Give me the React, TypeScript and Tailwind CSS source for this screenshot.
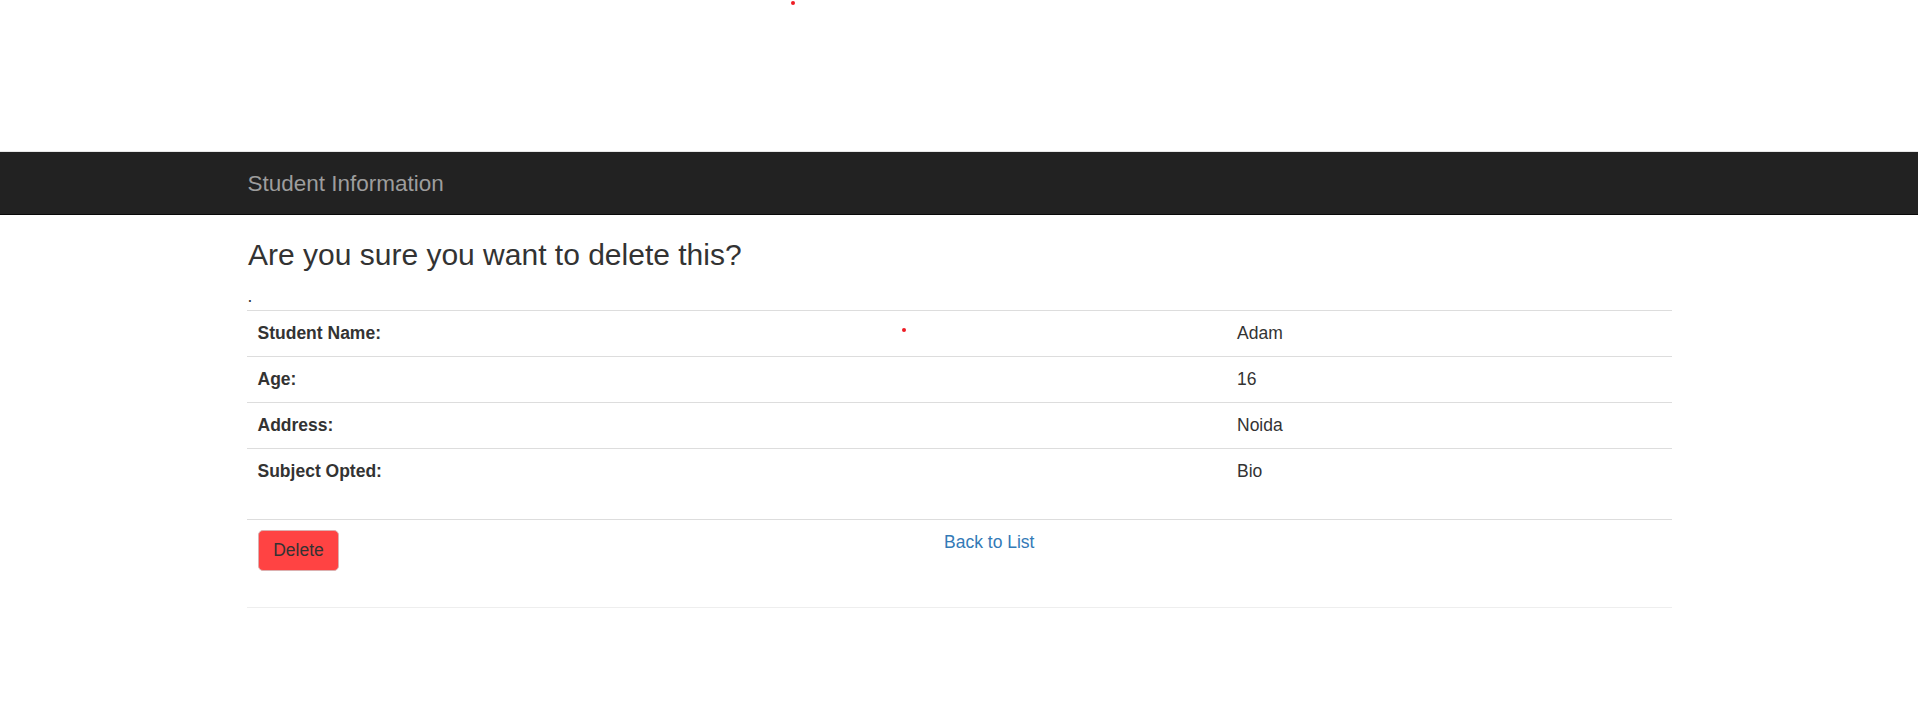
import React from "react";

const rows: { label: string; value: string; tall?: boolean }[] = [
  { label: "Student Name:", value: "Adam" },
  { label: "Age:", value: "16" },
  { label: "Address:", value: "Noida" },
  { label: "Subject Opted:", value: "Bio", tall: true },
];

export default function App() {
  return (
    <div
      className="relative min-h-[716px] w-full bg-white text-[#333] text-[17.5px] leading-[25px]"
      style={{ fontFamily: '"Liberation Sans", Arial, Helvetica, sans-serif' }}
    >
      <div className="absolute left-[791px] top-[1px] h-[4px] w-[4px] rounded-full bg-[#ee1c24]" />
      <div className="h-[152px] border-b border-[#e7e7e7]" />
      <div className="h-[63px] w-full border-b border-[#080808] bg-[#222]">
        <div className="mx-auto flex h-full w-[1425px] items-center">
          <span className="pl-[1px] text-[22.5px] leading-[25px] text-[#9d9d9d]">Student Information</span>
        </div>
      </div>
      <div className="mx-auto w-[1425px]">
        <h3 className="mt-[23px] mb-[12.5px] h-[33px] pl-[1.5px] text-[30px] leading-[33px] font-normal text-[#333]">
          Are you sure you want to delete this?
        </h3>
        <div className="h-[26.5px] pl-[1px] leading-[25px]">.</div>
        <div className="relative">
          <div className="absolute left-[655px] top-[18px] h-[4px] w-[4px] rounded-full bg-[#ee1c24]" />
          {rows.map((r) => (
            <div key={r.label} className="grid grid-cols-[687.5px_293px_1fr] border-t border-[#ddd]">
              <div className={`py-[10px] pl-[11px] pr-[10px] font-bold ${r.tall ? "h-[70px]" : "h-[45px]"}`}>{r.label}</div>
              <div className="px-[10px] py-[10px]"></div>
              <div className="px-[10px] py-[10px]">{r.value}</div>
            </div>
          ))}
          <div className="grid h-[88px] grid-cols-[687.5px_293px_1fr] border-t border-[#ddd]">
            <div className="py-[10px] pl-[11.5px] pr-[10px]">
              <button className="flex h-[41px] w-[81px] items-center justify-center rounded-[5px] border border-[#dcb0b0] bg-[#ff4343] text-[17.5px] text-[#333]">
                Delete
              </button>
            </div>
            <div className="px-[10px] py-[10px]">
              <a className="text-[#337ab7]" href="#">Back to List</a>
            </div>
            <div />
          </div>
          <div className="border-t border-[#eee]" />
        </div>
      </div>
    </div>
  );
}
